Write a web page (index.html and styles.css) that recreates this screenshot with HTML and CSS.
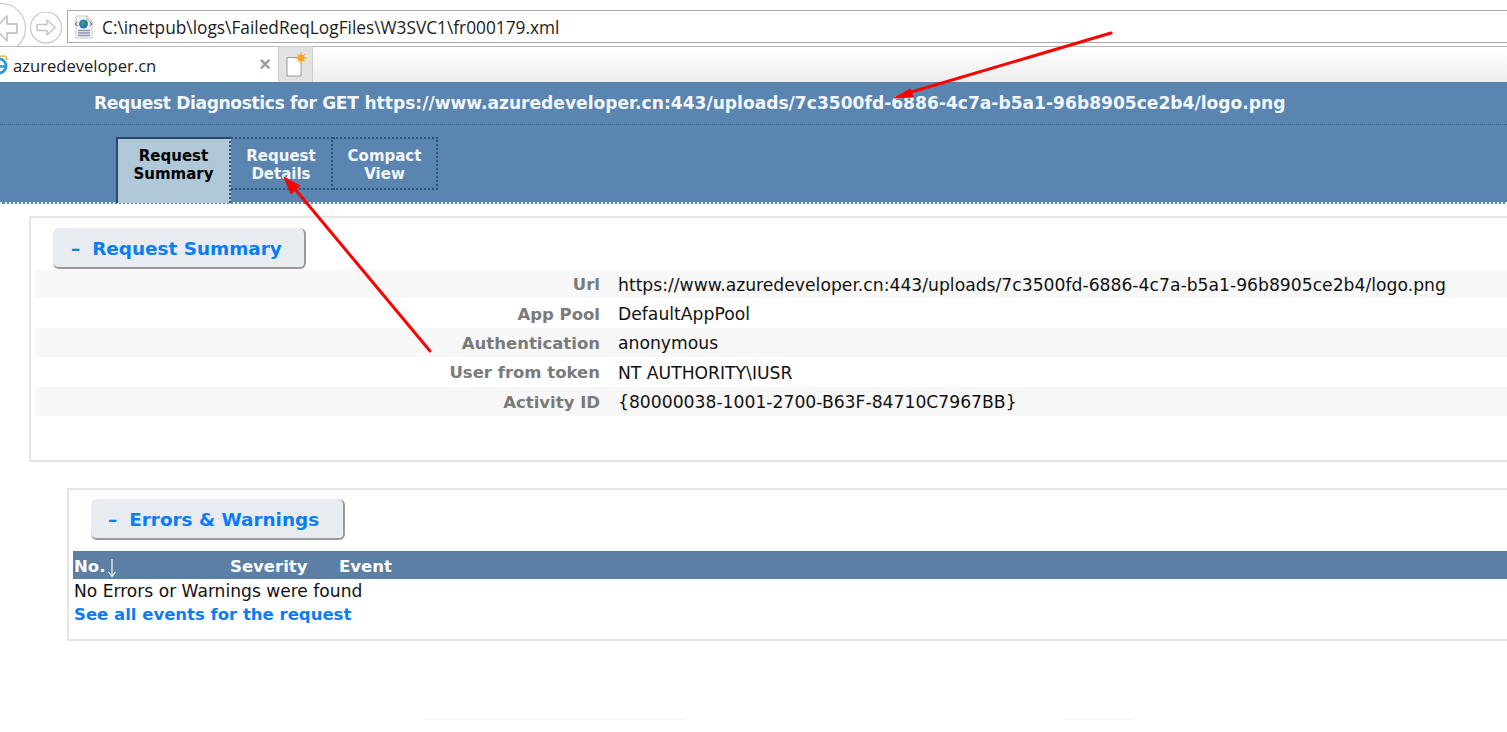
FILE: index.html
```html
<!DOCTYPE html>
<html lang="en">
<head>
<meta charset="utf-8">
<title>azuredeveloper.cn</title>
<link rel="stylesheet" href="styles.css">
</head>
<body>
<div class="page">
  <div class="addressrow">
    <div class="navbtn back">
      <svg width="52" height="52" viewBox="0 0 52 52"><circle cx="26" cy="26" r="24.500" fill="#fff" stroke="#c8c8c8" stroke-width="1.200"/><path d="M20 26.500 L32 14 V22 H42 V31 H32 V39 Z" fill="#fff" stroke="#c6c6c6" stroke-width="1.800" stroke-linejoin="round"/></svg>
    </div>
    <div class="navbtn forward">
      <svg width="33" height="33" viewBox="0 0 33 33"><circle cx="16" cy="15.500" r="15.500" fill="#fff" stroke="#c8c8c8" stroke-width="1.200"/><path d="M25 15.500 L17 8 V12.500 H7 V18.500 H17 V23 Z" fill="#fff" stroke="#c6c6c6" stroke-width="1.500" stroke-linejoin="round"/></svg>
    </div>
    <div class="addressbox">
      <svg class="docicon" width="21" height="24" viewBox="0 0 21 24"><path d="M3 1 H14 L19 6 V23 H3 Z" fill="#f6f6f6" stroke="#c9c9c9"/><path d="M14 1 V6 H19" fill="#e6e6e6" stroke="#bbb"/><circle cx="10.500" cy="9" r="4.500" fill="#2a76c8"/><path d="M8 6.500 L11.500 6 L12 9 L9 11 Z" fill="#3fa63f"/><path d="M4.500 7 L2 9 L4.500 11 M16.500 7 L19 9 L16.500 11" fill="none" stroke="#555" stroke-width="1"/><path d="M5 15.500 H17 M5 18 H17 M5 20.500 H17" stroke="#8d8fb5" stroke-width="1.400"/></svg>
      <span class="addresstext">C:\inetpub\logs\FailedReqLogFiles\W3SVC1\fr000179.xml</span>
    </div>
  </div>
  <div class="tabrow">
    <div class="browsertab">
      <svg class="ieicon" width="12" height="24" viewBox="0 0 12 24"><circle cx="-1" cy="13" r="7" fill="none" stroke="#2f9bd8" stroke-width="3"/><path d="M-8 13.500 H7" stroke="#2f9bd8" stroke-width="2.500"/><path d="M-5 5 Q7 0 7 7" fill="none" stroke="#e8b23a" stroke-width="1.500"/></svg>
      <span class="tabtitle">azuredeveloper.cn</span>
      <span class="tabclose">×</span>
    </div>
    <div class="newtab">
      <svg width="22" height="26" viewBox="0 0 22 26"><path d="M2 5.500 H14 L16 8 V24 H2 Z" fill="#fff" stroke="#9a9a9a"/><circle cx="16" cy="6" r="3.500" fill="#f5a623"/><path d="M16 0 V12 M10 6 H22 M12 2 L20 10 M20 2 L12 10" stroke="#f5a623" stroke-width="1"/></svg>
    </div>
    <div class="tabfill"></div>
  </div>
  <header class="diaghead">
    <h1 class="diagtitle"><span class="titlelead">Request Diagnostics for GET</span> https://www.azuredeveloper.cn:443/uploads/7c3500fd-6886-4c7a-b5a1-96b8905ce2b4/logo.png</h1>
  </header>
  <nav class="diagnav">
    <a class="diagtab active">Request<br>Summary</a>
    <a class="diagtab">Request<br>Details</a>
    <a class="diagtab last">Compact<br>View</a>
  </nav>
  <section class="panel summary">
    <div class="panelbtn"><span class="dash">–</span>Request Summary</div>
    <dl class="rows">
      <div class="row"><dt>Url</dt><dd>https://www.azuredeveloper.cn:443/uploads/7c3500fd-6886-4c7a-b5a1-96b8905ce2b4/logo.png</dd></div>
      <div class="row"><dt>App Pool</dt><dd>DefaultAppPool</dd></div>
      <div class="row"><dt>Authentication</dt><dd>anonymous</dd></div>
      <div class="row"><dt>User from token</dt><dd>NT AUTHORITY\IUSR</dd></div>
      <div class="row"><dt>Activity ID</dt><dd>{80000038-1001-2700-B63F-84710C7967BB}</dd></div>
    </dl>
  </section>
  <section class="panel errors">
    <div class="panelbtn"><span class="dash">–</span>Errors &amp; Warnings</div>
    <div class="tablehead"><span class="colno">No.<svg class="sortarrow" width="8" height="18" viewBox="0 0 8 18"><path d="M4 0 V17 M0.500 13 L4 17.500 L7.500 13" fill="none" stroke="#fff" stroke-width="1.100"/></svg></span><span class="colsev">Severity</span><span class="colevent">Event</span></div>
    <div class="noerrors">No Errors or Warnings were found</div>
    <a class="alllink">See all events for the request</a>
  </section>
  <div class="faint one"></div>
  <div class="faint two"></div>
  <svg class="annot" width="1507" height="732" viewBox="0 0 1507 732">
    <path d="M1111 33 L908 93" stroke="#f00" stroke-width="3" stroke-linecap="round"/>
    <path d="M894 98 L910 89 L913 97 Z" fill="#f00" stroke="#f00" stroke-linejoin="round"/>
    <path d="M430 351 L295 189" stroke="#f00" stroke-width="3" stroke-linecap="round"/>
    <path d="M284 177 L300 186 L291 194 Z" fill="#f00" stroke="#f00" stroke-linejoin="round"/>
  </svg>
</div>
</body>
</html>
```
FILE: styles.css
```css
html, body { margin: 0; padding: 0; background: #fff; }
body { width: 1507px; height: 732px; overflow: hidden; font-family: "DejaVu Sans", Verdana, sans-serif; }
.page { position: relative; width: 1507px; height: 732px; overflow: hidden; }

.addressrow { display: flex; align-items: flex-start; height: 46px; box-sizing: border-box; }
.navbtn { flex: none; }
.navbtn svg { display: block; }
.back { margin: 2px 0 0 -25px; }
.forward { margin: 12px 0 0 3px; }
.addressbox { flex: 1; display: flex; align-items: center; height: 33px; box-sizing: border-box; margin: 10px 0 0 4px; border: 1px solid #a9a9a9; border-right: 0; background: #fff; }
.docicon { margin-left: 5px; flex: none; }
.addresstext { margin: 2px 0 0 8px; font: 17.300px "Open Sans", "Noto Sans", sans-serif; color: #1c1c1c; }

.tabrow { display: flex; height: 36px; }
.browsertab { flex: none; display: flex; align-items: center; width: 278px; box-sizing: border-box; border-top: 1px solid #bdbdbd; background: #fff; position: relative; }
.ieicon { flex: none; }
.tabtitle { margin: 1px 0 0 1px; font: 16.600px "Open Sans", "Noto Sans", sans-serif; color: #1c1c1c; }
.tabclose { margin-left: auto; margin-right: 7px; font: bold 20px "Liberation Sans", sans-serif; color: #9c9c9c; }
.newtab { flex: none; width: 35px; box-sizing: border-box; background: #e2e2e2; border: 1px solid #cfcfcf; border-bottom: 0; display: flex; align-items: center; justify-content: center; }
.tabfill { flex: 1; background: linear-gradient(#fff, #eeeeee); border-top: 1px solid #b5b5b5; }

.diaghead { height: 42px; background: #5a85b1; border-bottom: 1px dotted #3d6186; display: flex; align-items: center; padding-left: 94px; }
.diagtitle { margin: 0; font: bold 17.100px "DejaVu Sans", Verdana, sans-serif; color: #f4f7fa; white-space: nowrap; }
.titlelead { letter-spacing: -0.360px; }

.diagnav { display: flex; align-items: flex-start; padding: 12px 0 0 116px; background: #5a85b1; border-bottom: 2px dotted #e9eef3; height: 65px; }
.diagtab { flex: none; width: 102px; height: 53px; box-sizing: border-box; padding-top: 8px; text-align: center; font: bold 15px/18px "DejaVu Sans", Verdana, sans-serif; color: #f4f7fa; border: 2px dotted #2f5279; border-left: 0; }
.diagtab.active { width: 115px; height: 66px; background: #b0c8d8; color: #000; border: 0; border-top: 2px solid #27486f; border-left: 2px solid #27486f; border-right: 2px dotted #2f5279; padding-top: 8px; }
.diagtab.last { width: 105px; }

.panel { border: 2px solid #e6e6e6; border-right: 0; box-sizing: border-box; }
.summary { margin: 12px 0 0 29px; height: 246px; padding: 10px 0 0 4px; }
.errors { margin: 26px 0 0 67px; height: 153px; padding: 9px 0 0 4px; }
.panelbtn { width: 253px; height: 41px; box-sizing: border-box; margin-left: 18px; display: flex; align-items: center; padding: 2px 0 0 18px; background: #e8ecf0; border-radius: 6px; border-right: 2px solid #9a9a9a; border-bottom: 2px solid #9a9a9a; font: bold 18.400px "DejaVu Sans", Verdana, sans-serif; color: #0a7df5; white-space: nowrap; }
.dash { margin-right: 12px; }
.rows { margin: 0; }
.row { display: flex; height: 29.400px; box-sizing: border-box; padding-top: 2px; align-items: center; font-size: 16.500px; }
.row:nth-child(odd) { background: #f8f8f8; }
.row dt { width: 565px; text-align: right; font-weight: bold; color: #7a7a7a; }
.row dd { margin: 0 0 0 18px; color: #111; white-space: nowrap; font-size: 17.200px; }

.errors .panelbtn { width: 254px; padding-left: 17px; }
.tablehead { position: relative; margin-top: 11px; height: 28px; background: #5b7fa5; color: #fff; font-weight: bold; font-size: 16.500px; line-height: 32px; }
.tablehead span { position: absolute; top: 0; white-space: nowrap; }
.colno { left: 1px; }
.sortarrow { margin-left: 3px; vertical-align: -5px; }
.colsev { left: 157px; }
.colevent { left: 266px; }
.noerrors { margin: 2px 0 0 1px; font-size: 17.100px; line-height: 20px; color: #111; }
.alllink { display: block; margin: 4px 0 0 1px; font-size: 16.500px; line-height: 20px; font-weight: bold; color: #0a7df5; }

.faint { position: absolute; top: 719px; height: 1px; background: #f7f7f7; }
.faint.one { left: 425px; width: 260px; }
.faint.two { left: 1065px; width: 68px; }
.annot { position: absolute; left: 0; top: 0; pointer-events: none; }
```
